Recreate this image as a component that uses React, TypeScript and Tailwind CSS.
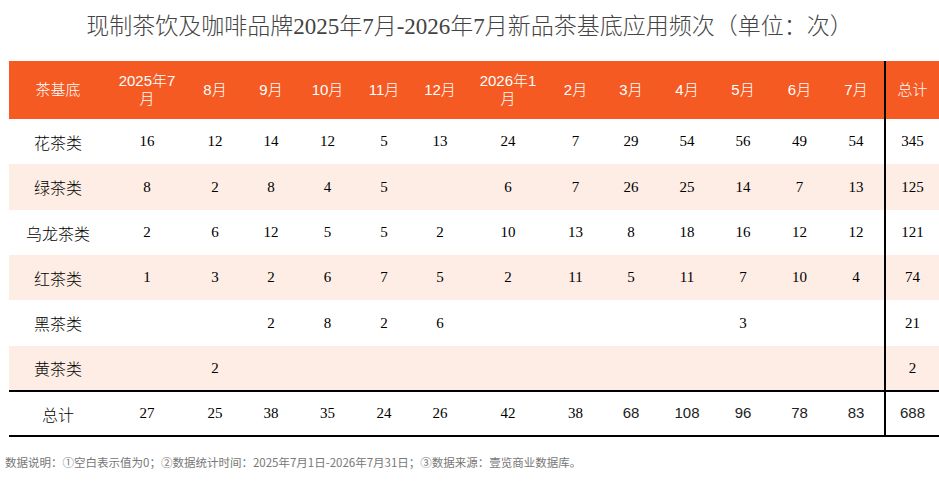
import React from "react";

const cols = "grid grid-cols-[98px_80px_56px_56px_57px_56px_56px_80px_55px_56px_56px_56px_57px_56px_55px]";

const headers: React.ReactNode[] = [
  "茶基底",
  <>2025年7<br />月</>,
  "8月",
  "9月",
  "10月",
  "11月",
  "12月",
  <>2026年1<br />月</>,
  "2月",
  "3月",
  "4月",
  "5月",
  "6月",
  "7月",
  "总计",
];

type Row = { name: string; vals: (number | null)[]; h: string };

const rows: Row[] = [
  { name: "花茶类", vals: [16, 12, 14, 12, 5, 13, 24, 7, 29, 54, 56, 49, 54, 345], h: "h-[45px]" },
  { name: "绿茶类", vals: [8, 2, 8, 4, 5, null, 6, 7, 26, 25, 14, 7, 13, 125], h: "h-[46px]" },
  { name: "乌龙茶类", vals: [2, 6, 12, 5, 5, 2, 10, 13, 8, 18, 16, 12, 12, 121], h: "h-[45px]" },
  { name: "红茶类", vals: [1, 3, 2, 6, 7, 5, 2, 11, 5, 11, 7, 10, 4, 74], h: "h-[45px]" },
  { name: "黑茶类", vals: [null, null, 2, 8, 2, 6, null, null, null, null, 3, null, null, 21], h: "h-[46px]" },
  { name: "黄茶类", vals: [null, 2, null, null, null, null, null, null, null, null, null, null, null, 2], h: "h-[44px]" },
];

const totals = [27, 25, 38, 35, 24, 26, 42, 38, 68, 108, 96, 78, 83, 688];

const serif = "font-['Liberation_Serif','Noto_Sans_CJK_SC',serif]";
const sans = "font-['Liberation_Sans','Noto_Sans_CJK_SC',sans-serif]";

export default function App() {
  return (
    <div className="w-[939px] h-[483px] bg-white overflow-hidden">
      <div className={`h-[61px] flex items-center justify-center pb-[6px] text-[23px] font-light text-[#444444] ${serif}`}>
        现制茶饮及咖啡品牌2025年7月-2026年7月新品茶基底应用频次（单位：次）
      </div>
      <div className="ml-[9px] w-[930px]">
        <div className={`${cols} h-[58px] bg-[#f55a23] text-white text-[15px] leading-[18px] font-light ${sans}`}>
          {headers.map((h, i) => (
            <div
              key={i}
              className={`flex items-center justify-center text-center ${i === 14 ? "border-l-2 border-black" : ""}`}
            >
              {h}
            </div>
          ))}
        </div>
        {rows.map((r, ri) => (
          <div
            key={r.name}
            className={`${cols} ${r.h} ${ri % 2 === 1 ? "bg-[#fdede5]" : "bg-white"} text-black text-[15px] ${serif}`}
          >
            <div className="flex items-center justify-center text-[16px] font-light font-['Noto_Sans_CJK_SC',sans-serif]">{r.name}</div>
            {r.vals.map((v, i) => (
              <div
                key={i}
                className={`flex items-center justify-center ${i === 13 ? "border-l-2 border-black" : ""}`}
              >
                {v ?? ""}
              </div>
            ))}
          </div>
        ))}
        <div className={`${cols} h-[47px] border-t-2 border-b-2 border-black text-black text-[15px] ${serif}`}>
          <div className="flex items-center justify-center text-[16px] font-light font-['Noto_Sans_CJK_SC',sans-serif]">总计</div>
          {totals.map((v, i) => (
            <div
              key={i}
              className={`flex items-center justify-center ${i >= 8 ? `${sans} text-[#222222]` : ""} ${i === 13 ? "border-l-2 border-black" : ""}`}
            >
              {v}
            </div>
          ))}
        </div>
      </div>
      <div className="pl-[5px] pt-[17px] text-[11.5px] leading-[16px] text-[#777777] font-['Noto_Sans_CJK_SC',sans-serif] whitespace-nowrap">
        数据说明：①空白表示值为0；②数据统计时间：2025年7月1日-2026年7月31日；③数据来源：壹览商业数据库。
      </div>
    </div>
  );
}
